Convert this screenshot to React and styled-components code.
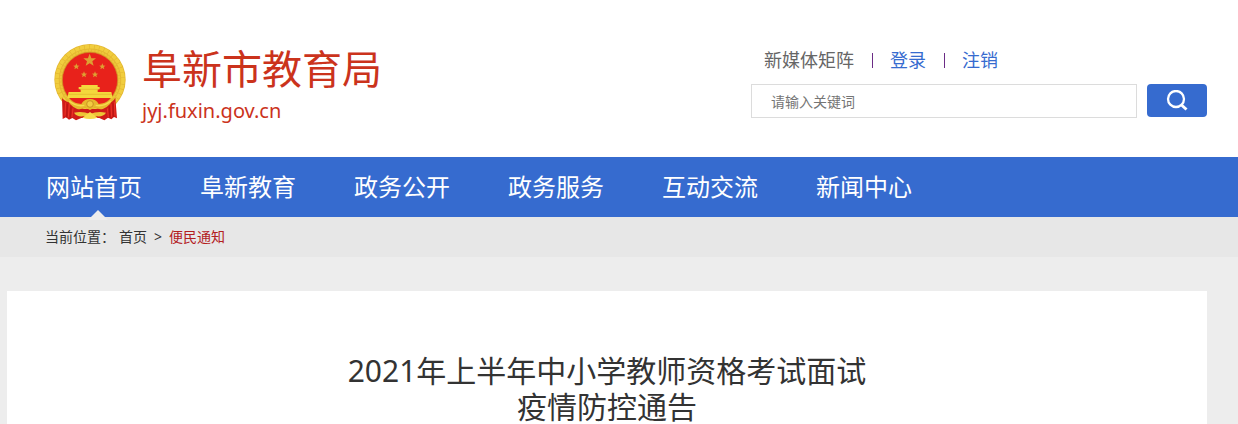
import React, { useState } from "react";
import styled, { createGlobalStyle, css } from "styled-components";

const GlobalStyle = createGlobalStyle`
  * {
    box-sizing: border-box;
  }
  html {
    background-color: #ededed;
  }
  body {
    margin: 0;
    color: #333;
    font-family: "Noto Sans", "Noto Sans CJK SC", sans-serif;
    font-size: 14px;
  }
  a {
    color: inherit;
    text-decoration: none;
  }
`;

const Header = styled.header`
  background-color: #fff;
`;
const HeaderInner = styled.div`
  display: flex;
  justify-content: space-between;
  margin: 0 31px 0 7px;
  padding: 43px 0 30px 47px;
`;
const Brand = styled.a`
  display: flex;
  gap: 15px;
  color: #cb331c;
`;
const Emblem = styled.svg`
  flex: none;
  width: 73px;
  height: 79px;
`;
const BrandText = styled.div`
  display: flex;
  flex-direction: column;
`;
const SiteName = styled.span`
  font-size: 40px;
  line-height: 52px;
`;
const SiteUrl = styled.span`
  font-size: 20px;
  line-height: 32px;
`;
const Tools = styled.div`
  display: flex;
  flex-direction: column;
  gap: 10px;
  width: 456px;
`;
const UserLinks = styled.div`
  display: flex;
  align-items: center;
  gap: 16px;
  padding: 3px 0 0 13px;
  font-size: 18px;
  line-height: 28px;
`;
const UserLink = styled.a`
  color: ${(props) => (props.$muted ? "#666" : "#366bcf")};
`;
const Divider = styled.span`
  width: 1px;
  height: 15px;
  margin: 0 1px 0 2px;
  background-color: #6b2c86;
`;
const SearchForm = styled.form`
  display: flex;
  align-items: flex-start;
  gap: 10px;
`;
const SearchInput = styled.input`
  flex: 1;
  min-width: 0;
  height: 34px;
  padding: 0 19px;
  border: 1px solid #dcdcdc;
  color: #333;
  font-family: inherit;
  font-size: 14px;
  &::placeholder {
    color: #757575;
  }
`;
const SearchButton = styled.button`
  display: flex;
  align-items: center;
  justify-content: center;
  width: 60px;
  height: 33px;
  padding: 0;
  border: 0;
  border-radius: 4px;
  background-color: #366bcf;
  cursor: pointer;
`;

const Nav = styled.nav`
  background-color: #366bcf;
`;
const NavList = styled.ul`
  display: flex;
  gap: 58px;
  margin: 0 31px 0 7px;
  padding: 0 0 0 39px;
  list-style: none;
`;
const NavLink = styled.a`
  position: relative;
  display: block;
  color: #fff;
  font-size: 24px;
  line-height: 60px;
  white-space: nowrap;
  ${(props) =>
    props.$active &&
    css`
      &::after {
        content: "";
        position: absolute;
        left: 50%;
        bottom: -3px;
        margin-left: -6px;
        border: 10px solid transparent;
        border-top: 0;
        border-bottom-color: #ededed;
      }
    `}
`;

const Breadcrumb = styled.nav`
  background-color: #e7e7e7;
`;
const Crumbs = styled.div`
  display: flex;
  margin: 0 31px 0 7px;
  padding-left: 38px;
  line-height: 40px;
`;
const CrumbLabel = styled.span`
  margin-right: 4px;
`;
const CrumbArrow = styled.span`
  margin: 0 7px;
`;
const CurrentCrumb = styled.a`
  color: #b3201f;
`;

const Article = styled.main`
  margin: 34px 31px 0 7px;
  padding: 62px 40px 0;
  background-color: #fff;
`;
const Title = styled.h1`
  margin: 0;
  font-size: 30px;
  font-weight: 400;
  line-height: 36px;
  text-align: center;
`;

const navItems = [
  "网站首页",
  "阜新教育",
  "政务公开",
  "政务服务",
  "互动交流",
  "新闻中心",
];

const STAR =
  "M0-10 2.6-3.2 9.5-3.1 4 1.2 5.9 8.1 0 4.2-5.9 8.1-4 1.2-9.5-3.1-2.6-3.2Z";
const stars = [
  { x: 149, y: 76, size: 2 },
  { x: 109, y: 95, size: 1 },
  { x: 187, y: 95, size: 1 },
  { x: 132, y: 119, size: 1 },
  { x: 165, y: 119, size: 1 },
];

const NationalEmblem = () => (
  <Emblem viewBox="42 24 219 237" aria-hidden="true">
    <circle cx="150" cy="134" r="107" fill="#e3b630" />
    <circle
      cx="150"
      cy="134"
      r="99"
      fill="none"
      stroke="#f1cd3e"
      strokeWidth="11"
      strokeDasharray="13 2"
    />
    <circle
      cx="150"
      cy="134"
      r="88"
      fill="none"
      stroke="#edc63a"
      strokeWidth="6"
      strokeDasharray="8 2"
    />
    <circle cx="150" cy="135" r="83" fill="#e8221b" stroke="#cf9426" strokeWidth="2" />
    {stars.map((star) => (
      <path
        key={`${star.x}-${star.y}`}
        d={STAR}
        transform={`translate(${star.x} ${star.y}) scale(${star.size})`}
        fill="#dea032"
      />
    ))}
    <path d="M124 150H173V156H179V163H173V171H214L218 189H82L86 171H122V163H116V156H124Z" fill="#f4d83c" />
    <path d="M120 163H176M84 178H216" stroke="#e4b52c" strokeWidth="2" />
    <path d="M66 189Q78 203 96 203L130 222H170L205 203Q219 201 226 188L231 250 222 246 214 253 204 248 193 256 178 249H124L108 256 97 249 87 254 78 247 68 252Z" fill="#cf1b18" />
    <path d="M77 202 75 242M88 207 85 247M99 220 96 246M202 220 205 246M213 207 215 245M223 200 225 242" stroke="#ed3328" strokeWidth="3" />
    <path d="M82 207 80 248M93 214 91 249M208 214 210 249M219 205 220 246" stroke="#a91212" strokeWidth="2" />
    <path d="M79 188Q96 204 124 207Q132 192 150 192Q168 192 176 207Q204 204 221 188Q213 211 190 221Q178 226 166 217L150 225 134 217Q122 226 110 221Q87 211 79 188Z" fill="#e7b92d" />
    <path d="M88 199Q110 216 133 211M212 199Q190 216 167 211" fill="none" stroke="#f6d950" strokeWidth="4" />
    <circle cx="150" cy="207" r="10" fill="#f2cc42" stroke="#cb9223" strokeWidth="3" />
    <path d="M102 233Q128 228 150 237Q172 228 198 233Q188 248 166 243L150 249 134 243Q112 248 102 233Z" fill="#edc537" />
    <path d="M150 231 127 248Q150 256 173 248Z" fill="#f6db4a" />
  </Emblem>
);

const App = () => {
  const [keyword, setKeyword] = useState("");

  return (
    <>
      <GlobalStyle />
      <Header>
        <HeaderInner>
          <Brand href="#">
            <NationalEmblem />
            <BrandText>
              <SiteName>阜新市教育局</SiteName>
              <SiteUrl>jyj.fuxin.gov.cn</SiteUrl>
            </BrandText>
          </Brand>
          <Tools>
            <UserLinks>
              <UserLink href="#" $muted>
                新媒体矩阵
              </UserLink>
              <Divider />
              <UserLink href="#">登录</UserLink>
              <Divider />
              <UserLink href="#">注销</UserLink>
            </UserLinks>
            <SearchForm onSubmit={(e) => e.preventDefault()}>
              <SearchInput
                type="text"
                aria-label="请输入关键词"
                placeholder="请输入关键词"
                value={keyword}
                onChange={(e) => setKeyword(e.target.value)}
              />
              <SearchButton type="submit" aria-label="搜索">
                <svg width="22" height="22" viewBox="0 0 22 22" fill="none" stroke="#fff">
                  <circle cx="10" cy="9" r="8" strokeWidth="2.3" />
                  <path d="M15.5 15 20.5 19.5" strokeWidth="3" />
                </svg>
              </SearchButton>
            </SearchForm>
          </Tools>
        </HeaderInner>
      </Header>
      <Nav>
        <NavList>
          {navItems.map((item, index) => (
            <li key={item}>
              <NavLink href="#" $active={index === 0}>
                {item}
              </NavLink>
            </li>
          ))}
        </NavList>
      </Nav>
      <Breadcrumb>
        <Crumbs>
          <CrumbLabel>当前位置：</CrumbLabel>
          <a href="#">首页</a>
          <CrumbArrow>&gt;</CrumbArrow>
          <CurrentCrumb href="#">便民通知</CurrentCrumb>
        </Crumbs>
      </Breadcrumb>
      <Article>
        <Title>
          2021年上半年中小学教师资格考试面试
          <br />
          疫情防控通告
        </Title>
      </Article>
    </>
  );
};

export default App;
